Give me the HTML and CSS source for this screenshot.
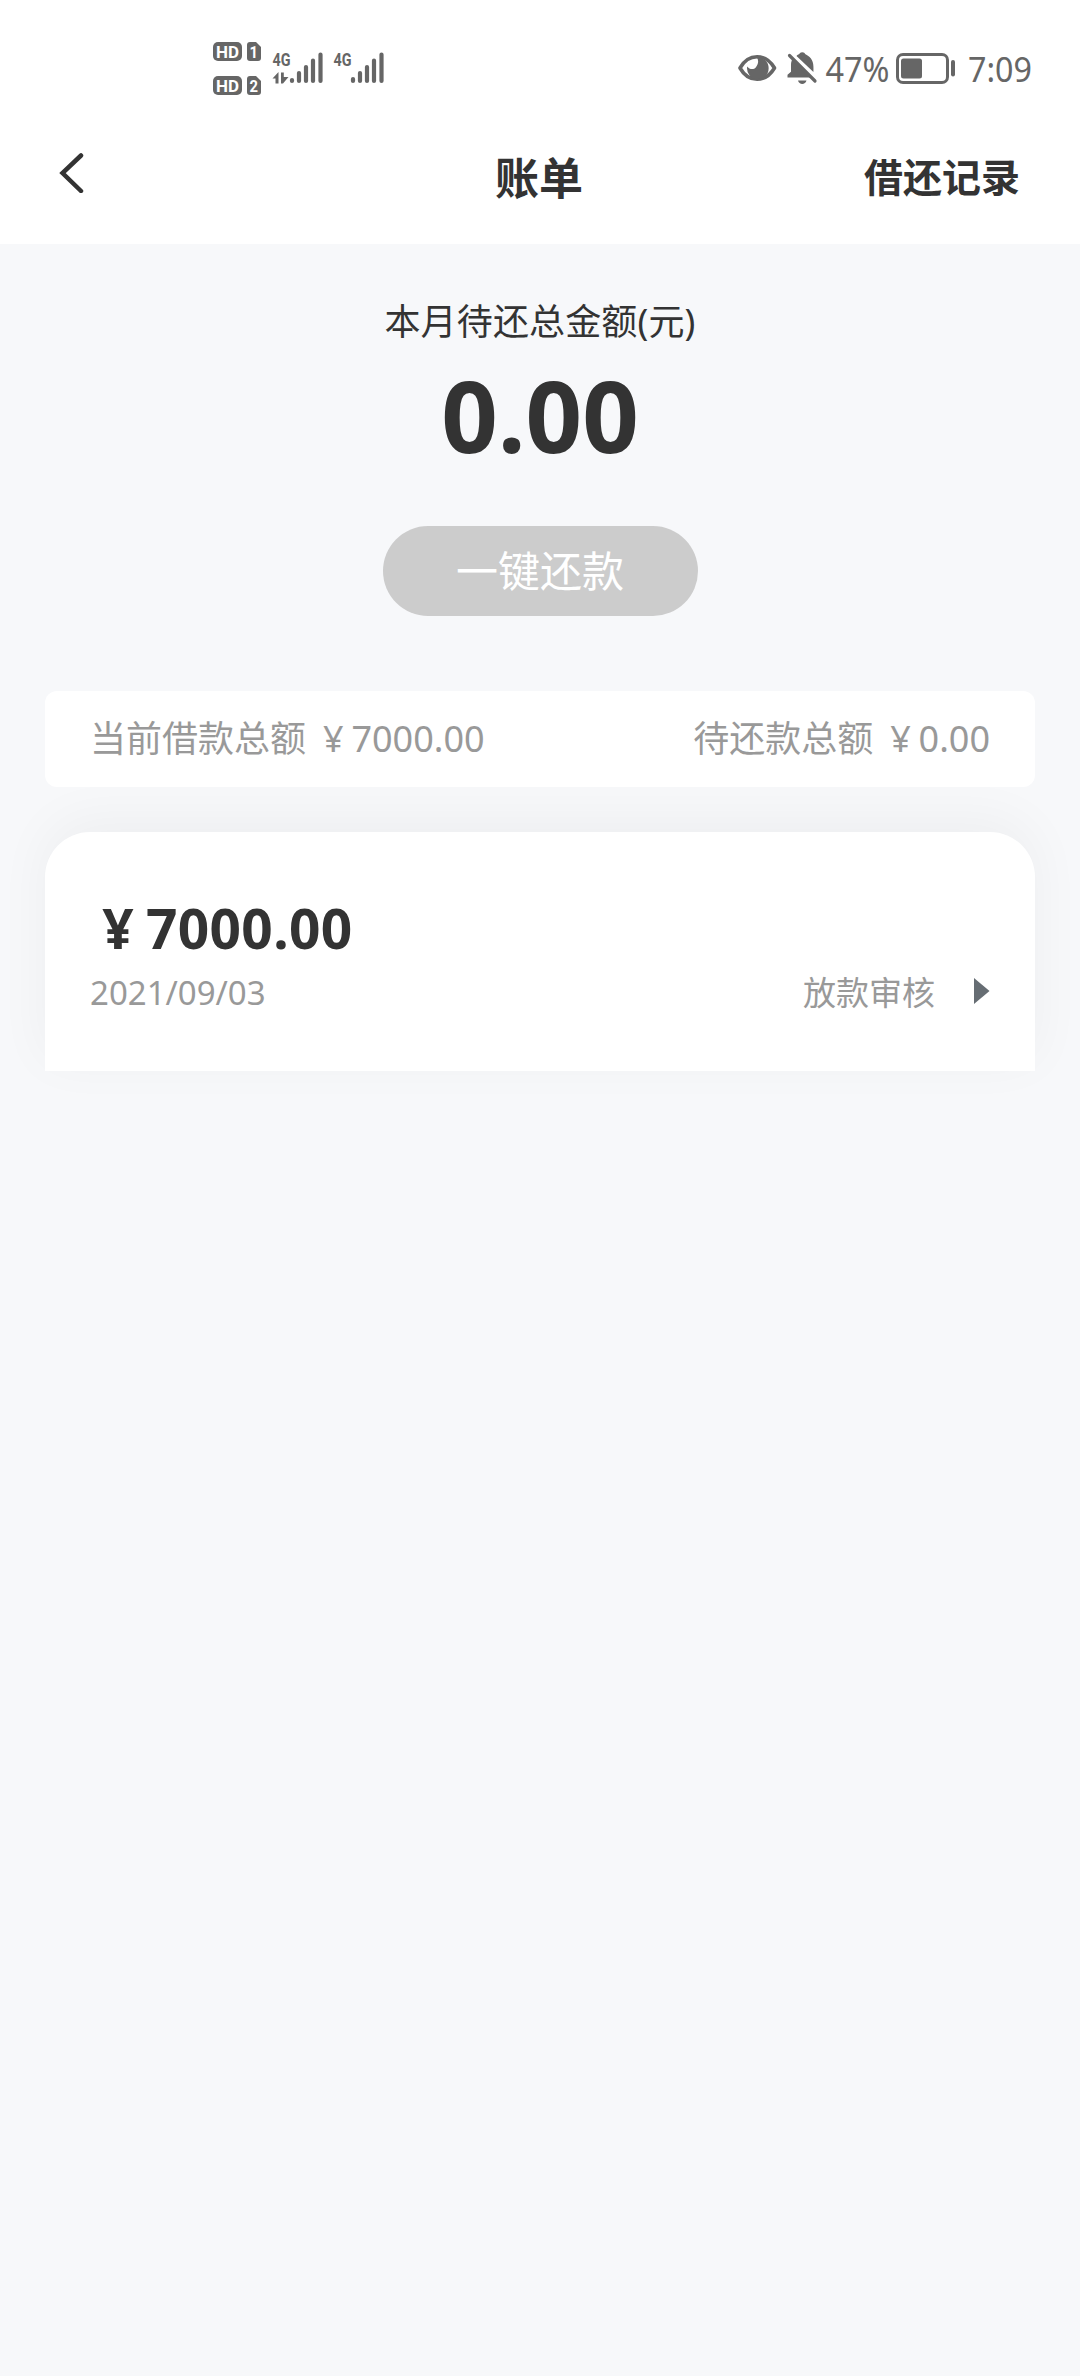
FILE: index.html
```html
<!DOCTYPE html>
<html lang="zh-CN">
<head>
<meta charset="utf-8">
<title>账单</title>
<link rel="stylesheet" href="styles.css">
</head>
<body>
<header class="top">
  <div class="status">
    <svg class="status-net" width="190" height="80" viewBox="200 30 190 80">
      <g class="fill">
        <rect x="213" y="42" width="29" height="19" rx="5"/>
        <rect x="213" y="76" width="29" height="19" rx="5"/>
        <path d="M250 42h6l5 5v11a3 3 0 0 1-3 3h-8a3 3 0 0 1-3-3V45a3 3 0 0 1 3-3z"/>
        <path d="M250 76h6l5 5v11a3 3 0 0 1-3 3h-8a3 3 0 0 1-3-3V79a3 3 0 0 1 3-3z"/>
        <path d="M272.500 78.500l6-6.500v11.500h-3v-5zM281 72.500h2.800v4.500h4.700l-5.500 6.500h-2z"/>
      </g>
      <g class="badge-text">
        <text x="216" y="58" textLength="23" lengthAdjust="spacingAndGlyphs">HD</text>
        <text x="216" y="92" textLength="23" lengthAdjust="spacingAndGlyphs">HD</text>
        <text x="249.500" y="58" textLength="8.500" lengthAdjust="spacingAndGlyphs">1</text>
        <text x="249.500" y="92" textLength="8.500" lengthAdjust="spacingAndGlyphs">2</text>
      </g>
      <g class="net-text">
        <text x="272.500" y="66" textLength="18" lengthAdjust="spacingAndGlyphs">4G</text>
        <text x="333.500" y="66" textLength="18" lengthAdjust="spacingAndGlyphs">4G</text>
      </g>
      <g class="bars">
        <path d="M292 80v1M299 73v8M306 67v14M313 60.500v20.500M320.500 54.500v26.500"/>
        <path d="M353 79v2M360 73v8M367 67v14M374 60.500v20.500M381.500 54.500v26.500"/>
      </g>
    </svg>
    <svg class="status-sys" width="330" height="80" viewBox="720 30 330 80">
      <path class="line" stroke-width="3.600" stroke-linejoin="round" d="M740 68C748.500 53 765.500 53 774.500 68C765.500 83 748.500 83 740 68z"/>
      <path class="fill" d="M757 57.500a10.800 10.800 0 1 1-9.800 9c2 3 6.500 3.500 8.500 1c2.500-3 3.300-6.500 1.300-10z"/>
      <path class="fill" d="M796.500 56c1-1.500 2.800-1.500 3.500-3 1-1 3.500-1 4.500 0 .8 1.500 1.800 1.700 3.400 2.700 5 3.300 6 8 5.500 16.300zM792.500 59L811 77.500h-23.500v-2.800l3.500-3v-7c0-2.200.5-4 1.500-5.700zM798 80.500h8.500c-1 4.500-7.500 4.500-8.500 0z"/>
      <path class="line round" stroke-width="3.200" d="M789.500 55.500L815 81"/>
      <text class="sys-text" x="825.500" y="82" textLength="64" lengthAdjust="spacingAndGlyphs">47%</text>
      <rect class="line" stroke-width="3" x="897.500" y="54.500" width="50" height="28" rx="5.500"/>
      <rect class="fill" x="901" y="58.500" width="21" height="20" rx="2.500"/>
      <rect class="fill" x="951" y="60" width="4" height="16.500" rx="2"/>
      <text class="sys-text" x="968" y="82" textLength="64" lengthAdjust="spacingAndGlyphs">7:09</text>
    </svg>
  </div>
  <nav class="nav">
    <svg class="back" width="26" height="40" viewBox="0 0 26 40"><path d="M23 2.500L4.500 20 23 38"/></svg>
    <h1 class="title">账单</h1>
    <span class="records">借还记录</span>
  </nav>
</header>
<main class="content">
  <p class="due-label">本月待还总金额(元)</p>
  <p class="due-amount">0.00</p>
  <button class="pay">一键还款</button>
  <section class="summary">
    <span>当前借款总额 <span class="yen">¥</span>7000.00</span>
    <span>待还款总额 <span class="yen">¥</span>0.00</span>
  </section>
  <section class="loan">
    <p class="loan-amount"><span class="yen">¥</span>7000.00</p>
    <div class="loan-row">
      <span>2021/09/03</span>
      <span class="loan-state">放款审核<svg width="16" height="28" viewBox="0 0 16 28"><path d="M0 1L15.500 14 0 27z"/></svg></span>
    </div>
  </section>
</main>
</body>
</html>
```
FILE: styles.css
```css
* { box-sizing: border-box; }
body {
  margin: 0;
  min-height: 2376px;
  background: #f7f8fa;
  color: #333;
  font-family: "Noto Sans", "Noto Sans CJK SC", sans-serif;
}
p, h1 { margin: 0; }
.top { height: 244px; background: #fff; }
.status {
  height: 110px;
  padding: 30px 30px 0 200px;
  display: flex;
  justify-content: space-between;
}
.fill { fill: #666; }
.line { fill: none; stroke: #666; }
.round, .bars { stroke-linecap: round; }
.bars { fill: none; stroke: #666; stroke-width: 4.200; }
.badge-text { fill: #fff; font: 700 17px Roboto, sans-serif; }
.net-text { fill: #666; font: 700 19px Roboto, sans-serif; }
.sys-text { fill: #666; font: 400 34px "Noto Sans", sans-serif; }
.nav {
  height: 134px;
  padding: 0 60px 0 58px;
  display: grid;
  grid-template-columns: 1fr auto 1fr;
  align-items: start;
}
.back { margin-top: 43px; fill: none; stroke: #333; stroke-width: 4.500; stroke-linecap: round; }
.title { padding-top: 38px; font-size: 44px; line-height: 60px; font-weight: 700; }
.records { padding-top: 37px; justify-self: end; font-size: 39px; line-height: 60px; font-weight: 700; }
.content {
  padding: 49px 45px 0;
  display: flex;
  flex-direction: column;
  align-items: center;
}
.due-label { font-size: 36px; line-height: 58px; letter-spacing: .15px; }
.due-amount { font-size: 99px; line-height: 128px; font-weight: 700; }
.pay {
  width: 315px;
  height: 90px;
  margin-top: 47px;
  padding: 0;
  border: 0;
  border-radius: 45px;
  background: #ccc;
  color: #fff;
  font-family: inherit;
  font-size: 42px;
  line-height: 90px;
}
.yen { display: inline-block; width: 1em; text-align: center; }
.summary {
  position: relative;
  z-index: 1;
  width: 100%;
  height: 96px;
  margin-top: 75px;
  padding: 0 45px;
  display: flex;
  justify-content: space-between;
  align-items: center;
  border-radius: 12px;
  background: #fff;
  color: #999;
  font-size: 36px;
  line-height: 54px;
}
.loan {
  width: 100%;
  height: 239px;
  margin-top: 45px;
  padding: 57px 45px 0;
  border-radius: 45px 45px 0 0;
  background: #fff;
  box-shadow: 0 -12px 54px rgba(0, 0, 0, .045);
}
.loan-amount { font-size: 55px; line-height: 78px; font-weight: 700; letter-spacing: .3px; }
.loan-amount .yen { width: 1.020em; }
.loan-row {
  display: flex;
  justify-content: space-between;
  color: #999;
  font-size: 33px;
  line-height: 52px;
}
.loan-state { display: flex; align-items: center; gap: 39px; }
.loan-state svg { margin-bottom: 4px; fill: #666d73; }
```
